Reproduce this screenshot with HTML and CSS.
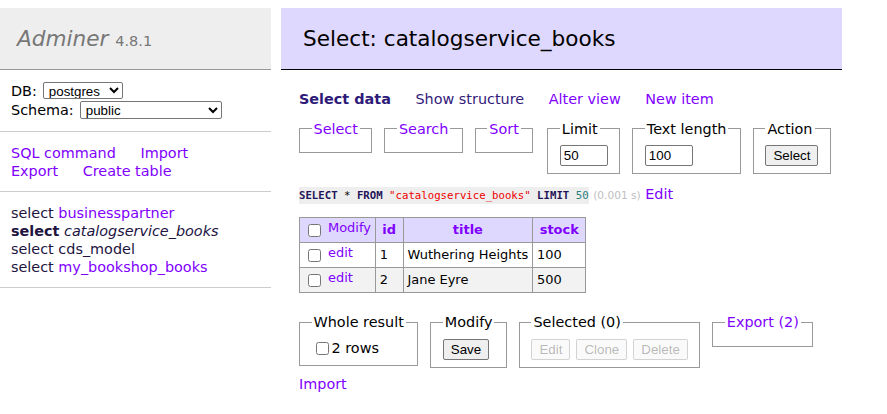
FILE: index.html
```html
<!DOCTYPE html>
<html lang="en">
<head>
<meta charset="utf-8">
<title>Select: catalogservice_books - Adminer</title>
<link rel="stylesheet" href="styles.css">
</head>
<body>
<div class="page">
  <div class="menu">
    <h1 class="brand"><a class="brand-name" href="#">Adminer</a> <span class="version">4.8.1</span></h1>
    <div class="menu-sec">
      <div class="db-line"><span>DB:</span><select class="db-select"><option>postgres</option></select></div>
      <div class="db-line"><span>Schema:</span><select class="schema-select"><option>public</option></select></div>
    </div>
    <p class="menu-sec side-links">
      <a href="#">SQL command</a> <a href="#">Import</a><br><a href="#">Export</a> <a href="#">Create table</a>
    </p>
    <ul class="menu-sec tables">
      <li><a class="sel" href="#">select</a> <a href="#">businesspartner</a></li>
      <li><a class="sel active" href="#">select</a> <a class="dark view" href="#">catalogservice_books</a></li>
      <li><a class="sel" href="#">select</a> <a class="dark" href="#">cds_model</a></li>
      <li><a class="sel" href="#">select</a> <a href="#">my_bookshop_books</a></li>
    </ul>
  </div>

  <div class="content">
    <h2 class="title">Select: catalogservice_books</h2>
    <div class="main">
      <p class="nav-links">
        <a class="current" href="#">Select data</a> <a class="visited" href="#">Show structure</a> <a href="#">Alter view</a> <a href="#">New item</a>
      </p>

      <div class="fs-row">
        <fieldset class="box"><legend><a href="#">Select</a></legend></fieldset>
        <fieldset class="box"><legend><a href="#">Search</a></legend></fieldset>
        <fieldset class="box"><legend><a href="#">Sort</a></legend></fieldset>
        <fieldset class="box limit"><legend>Limit</legend><div class="fs-body"><input class="field" type="text" value="50"></div></fieldset>
        <fieldset class="box"><legend>Text length</legend><div class="fs-body"><input class="field" type="text" value="100"></div></fieldset>
        <fieldset class="box action-box"><legend>Action</legend><div class="fs-body"><button class="btn" type="button">Select</button></div></fieldset>
      </div>

      <p class="sql">
        <code class="sql-code"><b class="kw">SELECT</b> * <b class="kw">FROM</b> <span class="str">"catalogservice_books"</span> <b class="kw">LIMIT</b> <span class="num">50</span></code> <span class="time">(0.001 s)</span> <a href="#">Edit</a>
      </p>

      <table class="grid">
        <thead>
          <tr>
            <td><input class="cb" type="checkbox"> <a class="raised" href="#">Modify</a></td>
            <th><a href="#">id</a></th>
            <th><a href="#">title</a></th>
            <th><a href="#">stock</a></th>
          </tr>
        </thead>
        <tbody>
          <tr>
            <td><input class="cb" type="checkbox"> <a class="raised" href="#">edit</a></td>
            <td>1</td>
            <td>Wuthering Heights</td>
            <td>100</td>
          </tr>
          <tr class="odd">
            <td><input class="cb" type="checkbox"> <a class="raised" href="#">edit</a></td>
            <td>2</td>
            <td>Jane Eyre</td>
            <td>500</td>
          </tr>
        </tbody>
      </table>

      <div class="fs-row footer-row">
        <fieldset class="box"><legend>Whole result</legend><label class="all"><input class="cb" type="checkbox">2 rows</label></fieldset>
        <fieldset class="box"><legend>Modify</legend><div class="fs-body"><button class="btn" type="button">Save</button></div></fieldset>
        <fieldset class="box"><legend>Selected (0)</legend>
          <div class="fs-body">
            <button class="btn" type="button" disabled>Edit</button>
            <button class="btn" type="button" disabled>Clone</button>
            <button class="btn" type="button" disabled>Delete</button>
          </div>
        </fieldset>
        <fieldset class="box"><legend><a href="#">Export (2)</a></legend></fieldset>
      </div>

      <p class="import"><a href="#">Import</a></p>
    </div>
  </div>
</div>
</body>
</html>
```

FILE: styles.css
```css
* {
  box-sizing: border-box;
}

body {
  margin: 0;
  background: #fff;
  color: #000;
  font: 14.4px/1.25 "DejaVu Sans", Verdana, sans-serif;
}

a {
  color: #7f00ff;
  text-decoration: none;
}

.page {
  display: flex;
  align-items: flex-start;
  padding-top: 8px;
}

/* ---------- sidebar ---------- */
.menu {
  width: 271px;
  flex: none;
}

.brand {
  margin: 0;
  height: 62px;
  padding: 17px 17px;
  font-size: 21.6px;
  line-height: 27px;
  font-weight: normal;
  color: #777;
  background: #eee;
  border-bottom: 1px solid #999;
}

.brand-name {
  color: #777;
  font-style: italic;
}

.version {
  font-size: 14.5px;
  line-height: 1;
  color: #777;
}

.menu-sec {
  margin: 0;
  padding: 11.5px 11px;
  border-bottom: 1px solid #ccc;
}

.db-line {
  height: 19px;
  display: flex;
  align-items: center;
  gap: 6px;
}

.db-select,
.schema-select {
  font: 13.33px "Liberation Sans", Arial, sans-serif;
  color: #000;
  background: #fff;
  border: 1px solid #767676;
  border-radius: 2px;
  padding: 0 0 0 1px;
}

.db-select {
  width: 80px;
  height: 17px;
  margin-top: -2px;
}

.schema-select {
  width: 142px;
  height: 18px;
}

.side-links a {
  margin-right: 20px;
}

.tables {
  list-style: none;
}

.sel,
.dark {
  color: #22143f;
}

.active {
  font-weight: bold;
}

.view {
  font-style: italic;
}

/* ---------- content ---------- */
.content {
  width: 561px;
  margin-left: 10px;
  flex: none;
}

.title {
  margin: 0 0 20px;
  height: 62px;
  padding: 17px 22px;
  font-size: 21.6px;
  line-height: 27px;
  font-weight: normal;
  color: #000;
  background: #dfd8fe;
  border-bottom: 1px solid #000;
}

.main {
  padding-left: 18px;
}

.nav-links {
  margin: 0;
}

.nav-links a {
  margin-right: 20px;
}

.nav-links .current {
  color: #2e1a78;
  font-weight: bold;
}

.nav-links .visited {
  color: #33207a;
}

.fs-row {
  display: flex;
  align-items: flex-start;
  gap: 12px;
  margin-top: 11.5px;
}

.box {
  flex: none;
  margin: 0;
  min-width: 0;
  padding: 7.2px 11.5px;
  border: 1px solid #999;
}

.box legend {
  padding: 0 2px;
  line-height: 18px;
}

.action-box {
  width: 78px;
}

.fs-body {
  display: flex;
  gap: 6px;
}

.limit {
  margin-left: 2px;
}

.field {
  width: 48px;
  height: 21px;
  padding: 1px 3px;
  font: 13.33px "Liberation Sans", Arial, sans-serif;
  color: #000;
  background: #fff;
  border: 1px solid #767676;
  border-radius: 2px;
}

.btn {
  flex: none;
  height: 21px;
  padding: 1px 7px;
  font: 13.33px "Liberation Sans", Arial, sans-serif;
  color: #000;
  background: #efefef;
  border: 1px solid #767676;
  border-radius: 2px;
}

.btn:disabled {
  color: rgba(16, 16, 16, 0.3);
  background: rgba(239, 239, 239, 0.3);
  border-color: rgba(118, 118, 118, 0.3);
}

.sql {
  margin: 11.5px 0 0;
}

.sql-code {
  font: 10.7px/1.25 "DejaVu Sans Mono", Consolas, monospace;
  background: #eee;
  padding: 2px 0;
}

.kw {
  color: #1f1457;
}

.str {
  color: #e00;
}

.num {
  color: #2a8080;
}

.time {
  color: #c0c0c0;
  font-size: 10.6px;
}

.grid {
  margin-top: 14px;
  border-collapse: collapse;
  font-size: 12.96px;
  line-height: 1.25;
}

.grid tr {
  height: 25px;
}

.grid td,
.grid th {
  border: 1px solid #999;
  padding: 2px 3.9px;
  text-align: left;
}

.grid thead th {
  padding: 2px 6.5px;
  text-align: center;
  background: #dfd8fe;
}

.grid thead td {
  background: #dfd8fe;
}

.grid .odd td {
  background: #f2f2f2;
}

.cb {
  width: 13px;
  height: 13px;
  margin: 3px 3px 3px 4px;
  vertical-align: middle;
}

.raised {
  vertical-align: 2px;
}

.footer-row {
  margin-top: 20px;
}

.all .cb {
  vertical-align: -2px;
}

.import {
  margin: 7.5px 0 0;
}
```
